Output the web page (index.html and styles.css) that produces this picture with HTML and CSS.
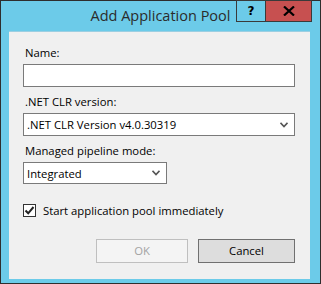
FILE: index.html
```html
<!DOCTYPE html>
<html>
<head>
<meta charset="utf-8">
<link rel="stylesheet" href="styles.css">
</head>
<body>
<div class="window">
  <div class="titlebar">
    <div class="title">Add Application Pool</div>
    <div class="controls">
      <div class="btn-help">?</div>
      <div class="btn-close">
        <svg width="12" height="10" viewBox="0 0 12 10"><path d="M1 0.5 L11 9.5 M11 0.5 L1 9.5" stroke="#000" stroke-width="2.2" fill="none"/></svg>
      </div>
    </div>
  </div>
  <div class="content">
    <div class="label label-first">Name:</div>
    <div class="textbox"></div>
    <div class="label">.NET CLR version:</div>
    <div class="select select-wide">
      <span class="select-text">.NET CLR Version v4.0.30319</span>
      <svg class="chev" width="8" height="6" viewBox="0 0 8 6"><path d="M0.5 0.8 L4 4.6 L7.5 0.8" stroke="#555" stroke-width="1.6" fill="none"/></svg>
    </div>
    <div class="label">Managed pipeline mode:</div>
    <div class="select select-narrow">
      <span class="select-text">Integrated</span>
      <svg class="chev" width="8" height="6" viewBox="0 0 8 6"><path d="M0.5 0.8 L4 4.6 L7.5 0.8" stroke="#555" stroke-width="1.6" fill="none"/></svg>
    </div>
    <div class="check-row">
      <div class="checkbox">
        <svg width="11" height="11" viewBox="0 0 11 11"><path d="M1.5 5.5 L4.2 8.3 L9.5 2" stroke="#222" stroke-width="2" fill="none"/></svg>
      </div>
      <span class="check-label">Start application pool immediately</span>
    </div>
    <div class="buttons">
      <div class="button button-disabled">OK</div>
      <div class="button button-default">Cancel</div>
    </div>
  </div>
</div>
</body>
</html>
```
FILE: styles.css
```css
html, body {
  margin: 0;
  padding: 0;
  background: #6ccbe9;
}
.window {
  width: 321px;
  height: 284px;
  box-sizing: border-box;
  border: 1px solid #2e2e2e;
  background: #6ccbe9;
  display: flex;
  flex-direction: column;
  font-family: "Open Sans", "Noto Sans", sans-serif;
  font-size: 11.3px;
  color: #000;
}
.titlebar {
  height: 30px;
  display: flex;
  position: relative;
}
.title {
  flex: 1;
  text-align: center;
  font-size: 14.5px;
  color: #2b2b2b;
  padding-top: 5px;
}
.controls {
  position: absolute;
  top: -1px;
  right: 8px;
  display: flex;
}
.btn-help {
  width: 29px;
  height: 22px;
  box-sizing: border-box;
  border: 1px solid #3a3a3a;
  border-right: none;
  font-family: "DejaVu Sans", sans-serif;
  font-weight: bold;
  font-size: 12px;
  text-align: center;
  line-height: 21px;
  color: #000;
}
.btn-close {
  width: 47px;
  height: 22px;
  box-sizing: border-box;
  border: 1px solid #3a3a3a;
  background: #c75050;
  display: flex;
  align-items: center;
  justify-content: center;
}
.content {
  margin: 0 10px 4px 8px;
  flex: 1;
  background: #f0f0f0;
  border-top: 1px solid #9ccfe2;
  padding: 0 15px 0 14px;
  display: flex;
  flex-direction: column;
}
.label {
  height: 16px;
  line-height: 16px;
  margin-top: 7px;
  margin-bottom: 3px;
  padding-left: 2px;
}
.label-first {
  margin-top: 13px;
}
.textbox {
  height: 23px;
  box-sizing: border-box;
  border: 1px solid #7a7a7a;
  background: #fff;
}
.select {
  height: 23px;
  box-sizing: border-box;
  border: 1px solid #7a7a7a;
  background: #fff;
  display: flex;
  align-items: center;
  padding: 0 6px 0 3px;
}
.select-narrow {
  width: 144px;
  height: 22px;
}
.select-text {
  flex: 1;
}
.check-row {
  display: flex;
  align-items: center;
  margin-top: 19px;
}
.checkbox {
  width: 13px;
  height: 13px;
  box-sizing: border-box;
  border: 1px solid #333;
  background: #fff;
  display: flex;
  align-items: center;
  justify-content: center;
}
.check-label {
  margin-left: 7px;
}
.buttons {
  display: flex;
  justify-content: flex-end;
  gap: 10px;
  margin-top: 21px;
}
.button {
  width: 92px;
  height: 24px;
  box-sizing: border-box;
  text-align: center;
  line-height: 22px;
}
.button-disabled {
  border: 1px solid #bfbfbf;
  background: #f4f4f4;
  color: #a3a3a3;
}
.button-default {
  width: 97px;
  border: 1px solid #707070;
  background: #dddddd;
  color: #000;
}
```
